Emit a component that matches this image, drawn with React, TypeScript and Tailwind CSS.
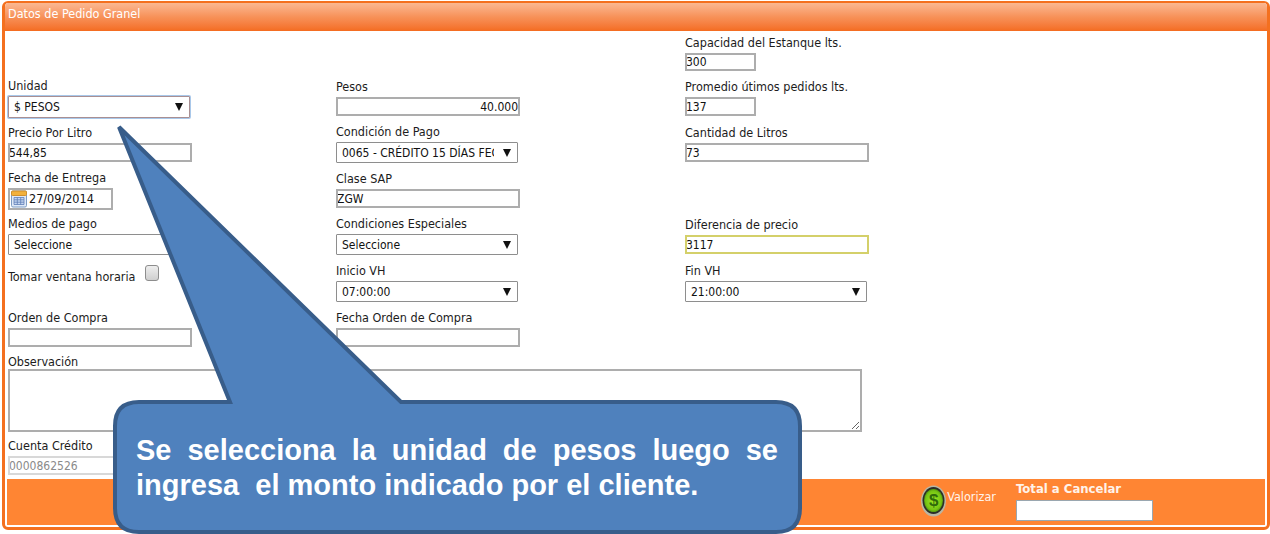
import type { ReactNode } from "react";

const inputCls =
  "block h-full w-full border-2 border-[#adadad] bg-white indent-[-1px] text-[12px] leading-none text-[#111] outline-none";

function Label({ children }: { children: ReactNode }) {
  return <div className="h-[17px] whitespace-nowrap text-[12.5px] leading-[13px] text-[#1c1c1c]">{children}</div>;
}

function TextField({
  label,
  value = "",
  className,
  boxClass,
  inputClass = "",
}: {
  label: string;
  value?: string;
  className: string;
  boxClass: string;
  inputClass?: string;
}) {
  return (
    <div className={className}>
      <Label>{label}</Label>
      <div className={boxClass}>
        <input readOnly value={value} className={`${inputCls} ${inputClass}`} />
      </div>
    </div>
  );
}

function SelectField({
  label,
  value,
  className,
  boxClass = "h-[21px] w-[182px]",
  focused = false,
}: {
  label: string;
  value: string;
  className: string;
  boxClass?: string;
  focused?: boolean;
}) {
  return (
    <div className={className}>
      <Label>{label}</Label>
      <div
        className={`flex items-center rounded-[1px] border bg-white pl-[5px] pr-[6px] text-[12px] text-[#111] ${boxClass} ${
          focused ? "border-[#a98f92] shadow-[0_0_0_1px_#a9c8ea]" : "border-[#8e8e8e]"
        }`}
      >
        <span className="min-w-0 flex-1 overflow-hidden whitespace-nowrap">{value}</span>
        <svg width="8" height="8" viewBox="0 0 8 8" className="ml-[9px] shrink-0">
          <path d="M0 0h8L4 8z" fill="#111" />
        </svg>
      </div>
    </div>
  );
}

function CalendarIcon() {
  return (
    <svg width="16" height="18" viewBox="0 0 16 18" className="shrink-0">
      <rect x="0.5" y="1" width="15" height="16" rx="1.5" fill="#dfe9f7" stroke="#7d9cc4" />
      <rect x="0.5" y="1" width="15" height="4.5" rx="1" fill="#f2b13c" stroke="#d2902a" />
      <path
        d="M3 7.5h10v7H3zM6.3 7.5v7M9.7 7.5v7M3 9.8h10M3 12.2h10"
        fill="#c5d6f0"
        stroke="#5f7fb8"
        strokeWidth="0.8"
      />
    </svg>
  );
}

function CoinIcon() {
  return (
    <div className="relative h-[32px] w-[25px] shrink-0">
      <svg width="25" height="32" viewBox="0 0 25 32" className="block">
        <defs>
          <radialGradient id="coin" cx="50%" cy="50%" r="55%">
            <stop offset="0%" stopColor="#a4ec22" />
            <stop offset="75%" stopColor="#76c414" />
            <stop offset="100%" stopColor="#3f7a0c" />
          </radialGradient>
        </defs>
        <ellipse cx="12.5" cy="16" rx="12.5" ry="15.5" fill="#b9b6a4" />
        <ellipse cx="12.5" cy="15.5" rx="11" ry="13.5" fill="#2b2f28" />
        <ellipse cx="12.5" cy="15.5" rx="9.5" ry="11.5" fill="url(#coin)" />
      </svg>
      <span className="absolute inset-0 flex items-center justify-center pb-px text-[17px] font-bold leading-none text-[#2f6a0a] [font-family:'Liberation_Sans',sans-serif]">
        $
      </span>
    </div>
  );
}

function Callout() {
  return (
    <div className="absolute left-0 top-0 h-[534px] w-[1270px]">
      <svg width="1270" height="534" viewBox="0 0 1270 534" className="absolute left-0 top-0">
        <path
          d="M119 127 L230 402 H139 Q115 402 115 426 V508 Q115 532 139 532 H776 Q800 532 800 508 V426 Q800 402 776 402 H401 Z"
          fill="#4f81bd"
          stroke="#385d8a"
          strokeWidth="4"
          strokeLinejoin="miter"
        />
      </svg>
      <div className="absolute left-[136px] top-[433px] w-[642px] text-justify text-[29px] font-bold leading-[35px] text-white [font-family:'Liberation_Sans',sans-serif]">
        Se selecciona la unidad de pesos luego se ingresa&nbsp; el monto indicado por el cliente.
      </div>
    </div>
  );
}

export default function App() {
  return (
    <div className="relative h-[534px] w-[1270px] overflow-hidden bg-white [font-family:'DejaVu_Sans_Condensed','DejaVu_Sans',sans-serif]">
      <div className="ml-[2px] mt-px flex h-[529px] w-[1268px] flex-col overflow-hidden rounded-[6px] border-[3px] border-t-2 border-[#f4701f] bg-white">
        <div className="h-[28px] shrink-0 bg-gradient-to-b from-[#fab892] via-[#f79158] to-[#f46c1f] pl-[3px] pt-[2px] text-[12.5px] leading-[18px] text-white">
          Datos de Pedido Granel
        </div>

        <div className="flex h-[316px] shrink-0 pl-[3px]">
          <div className="w-[328px] shrink-0">
            <SelectField
              label="Unidad"
              value="$ PESOS"
              className="mt-[48px]"
              boxClass="h-[22px] w-[182px]"
              focused
            />
            <TextField label="Precio Por Litro" value="544,85" className="mt-[8px]" boxClass="h-[19px] w-[184px]" />
            <div className="mt-[9px]">
              <Label>Fecha de Entrega</Label>
              <div className="flex h-[22px] w-[105px] items-center gap-[2px] border-2 border-[#adadad] bg-white pl-px text-[12.5px] text-[#111]">
                <CalendarIcon />
                <span>27/09/2014</span>
              </div>
            </div>
            <SelectField label="Medios de pago" value="Seleccione" className="mt-[7px]" />
            <div className="mt-[10px] flex h-[16px] items-start">
              <span className="mt-[4px] whitespace-nowrap text-[12.5px] leading-[15px] text-[#1c1c1c]">
                Tomar ventana horaria
              </span>
              <span className="ml-[10px] block h-[16px] w-[14px] rounded-[3px] border border-[#8d8d8d] bg-gradient-to-b from-[#eeeeee] to-[#cfcfcf]" />
            </div>
            <TextField label="Orden de Compra" className="mt-[30px]" boxClass="h-[19px] w-[184px]" />
          </div>

          <div className="w-[349px] shrink-0">
            <TextField
              label="Pesos"
              value="40.000"
              className="mt-[49px]"
              boxClass="h-[19px] w-[184px]"
              inputClass="text-right"
            />
            <SelectField label="Condición de Pago" value="0065 - CRÉDITO 15 DÍAS FECHA" className="mt-[9px]" />
            <TextField label="Clase SAP" value="ZGW" className="mt-[9px]" boxClass="h-[19px] w-[184px]" />
            <SelectField label="Condiciones Especiales" value="Seleccione" className="mt-[9px]" />
            <SelectField label="Inicio VH" value="07:00:00" className="mt-[9px]" />
            <TextField label="Fecha Orden de Compra" className="mt-[9px]" boxClass="h-[19px] w-[184px]" />
          </div>

          <div className="flex-1">
            <TextField
              label="Capacidad del Estanque lts."
              value="300"
              className="mt-[5px]"
              boxClass="h-[18px] w-[71px]"
            />
            <TextField
              label="Promedio útimos pedidos lts."
              value="137"
              className="mt-[9px]"
              boxClass="h-[19px] w-[71px]"
            />
            <TextField label="Cantidad de Litros" value="73" className="mt-[10px]" boxClass="h-[19px] w-[184px]" />
            <TextField
              label="Diferencia de precio"
              value="3117"
              className="mt-[56px]"
              boxClass="h-[19px] w-[184px]"
              inputClass="border-[#d4d06a]!"
            />
            <SelectField label="Fin VH" value="21:00:00" className="mt-[10px]" />
          </div>
        </div>

        <div className="mt-[8px] shrink-0 pl-[3px]">
          <div className="h-[14px] whitespace-nowrap text-[12.5px] leading-[13px] text-[#1c1c1c]">Observación</div>
          <textarea
            readOnly
            className="block h-[63px] w-[854px] border-2 border-[#adadad] bg-white outline-none"
          />
        </div>

        <TextField
          label="Cuenta Crédito"
          value="0000862526"
          className="mt-[7px] shrink-0 pl-[3px]"
          boxClass="h-[19px] w-[184px]"
          inputClass="border-[#d8d8d8]! text-[#8a8a8a]!"
        />

        <div className="mx-[2px] mb-[2px] mt-[4px] flex h-[46px] shrink-0 items-start justify-end bg-[#ff8533] pr-[112px]">
          <div className="mr-[20px] mt-[6px] flex items-start">
            <CoinIcon />
            <span className="ml-px mt-[6px] text-[12.5px] leading-none text-[#fff3ea]">Valorizar</span>
          </div>
          <div className="w-[137px] pt-px">
            <div className="h-[20px] whitespace-nowrap text-[13px] font-bold leading-[17px] text-[#fff3ea]">
              Total a Cancelar
            </div>
            <input readOnly className="block h-[21px] w-[137px] border border-[#9aa7b0] bg-white outline-none" />
          </div>
        </div>
      </div>

      <Callout />
    </div>
  );
}
